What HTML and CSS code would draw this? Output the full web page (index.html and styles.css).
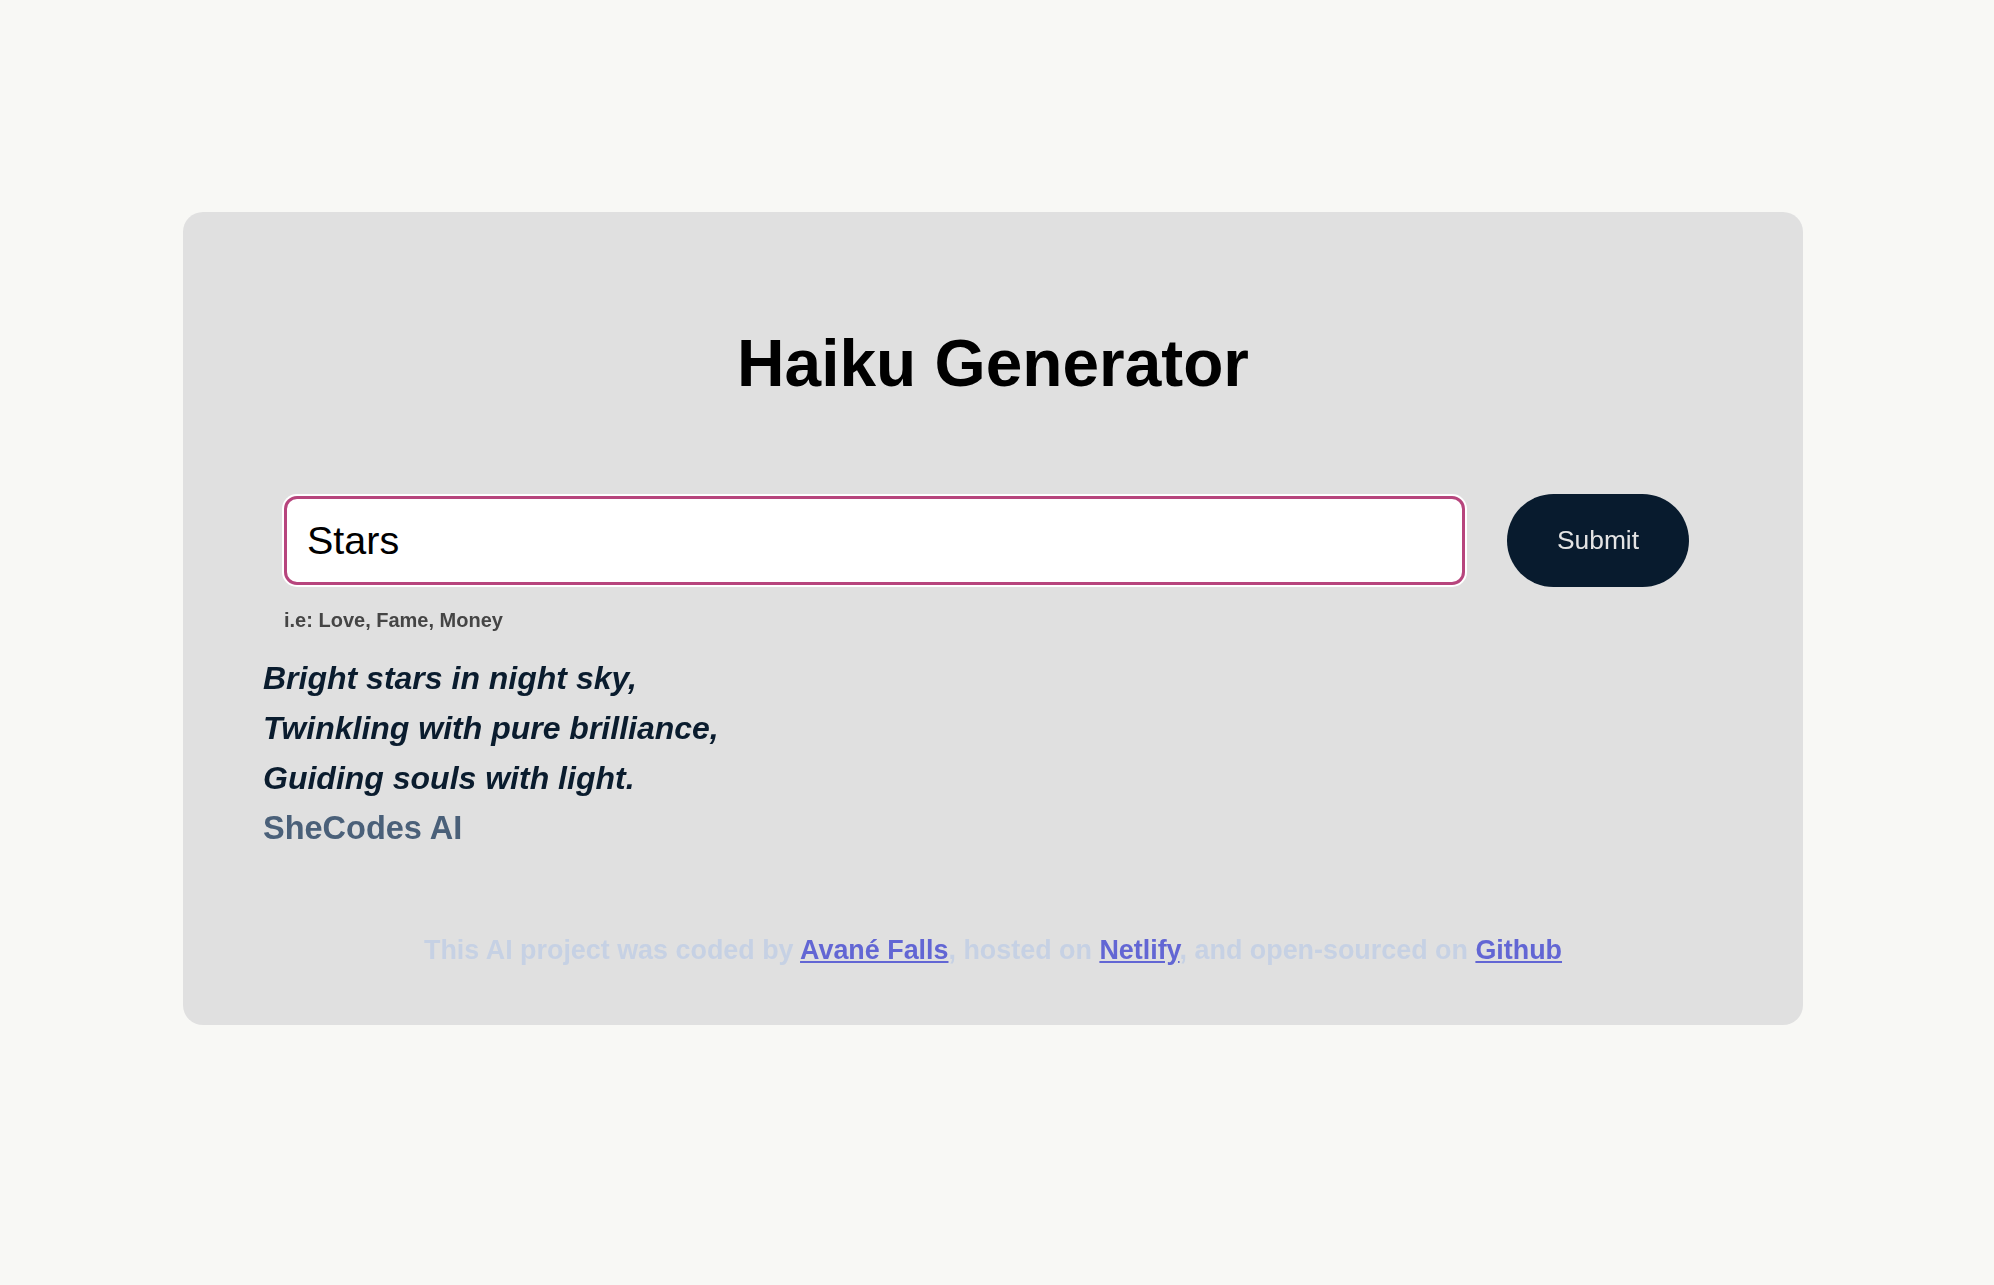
FILE: index.html
```html
<!DOCTYPE html>
<html lang="en">
<head>
<meta charset="utf-8">
<title>Haiku Generator</title>
<link rel="stylesheet" href="styles.css">
</head>
<body>
<main class="card">
  <h1 class="title">Haiku Generator</h1>
  <form class="search-form">
    <input class="topic-input" type="text" value="Stars" autofocus>
    <button class="submit-btn" type="button">Submit</button>
  </form>
  <p class="hint">i.e: Love, Fame, Money</p>
  <div class="poem">
    <p class="haiku">Bright stars in night sky,<br>Twinkling with pure brilliance,<br>Guiding souls with light.</p>
    <p class="signature">SheCodes AI</p>
  </div>
  <footer class="credits">This AI project was coded by <a href="#">Avané Falls</a>, hosted on <a href="#">Netlify</a>, and open-sourced on <a href="#">Github</a></footer>
</main>
</body>
</html>
```

FILE: styles.css
```css
html, body {
  margin: 0;
  padding: 0;
  background: #f8f8f5;
  font-family: "Liberation Sans", Arial, Helvetica, sans-serif;
}

body {
  padding: 212px 0 0 183px;
}

.card {
  box-sizing: border-box;
  width: 1620px;
  background: #e0e0e0;
  border-radius: 20px;
  padding: 119px 80px 61px 80px;
}

.title {
  margin: 0;
  font-size: 65.8px;
  line-height: 65px;
  font-weight: 700;
  text-align: center;
  color: #000;
}

.search-form {
  display: flex;
  align-items: center;
  gap: 42px;
  margin: 98px 0 0 21px;
}

.topic-input {
  box-sizing: border-box;
  width: 1181px;
  height: 89px;
  border: 3px solid #b7457d;
  border-radius: 13px;
  box-shadow: 0 0 0 2px #ffffff;
  outline: none;
  background: #ffffff;
  padding: 0 20px;
  font-family: "Liberation Sans", Arial, sans-serif;
  font-size: 39.5px;
  color: #000;
}

.submit-btn {
  box-sizing: border-box;
  width: 182px;
  height: 93px;
  border: none;
  border-radius: 999px;
  background: #081b2e;
  color: #e4e4e4;
  font-family: "Liberation Sans", Arial, sans-serif;
  font-size: 26.4px;
  padding: 0;
}

.hint {
  margin: 23px 0 0 21px;
  font-size: 20px;
  line-height: 20px;
  font-weight: 700;
  color: #454545;
}

.poem {
  margin-top: 23px;
}

.haiku,
.signature {
  margin: 0;
  font-size: 32px;
  line-height: 50px;
  font-weight: 700;
}

.haiku {
  font-style: italic;
  color: #0a1c2e;
}

.signature {
  font-size: 32.5px;
  color: #4a6079;
}

.credits {
  margin-top: 84px;
  text-align: center;
  font-size: 26.9px;
  line-height: 26.9px;
  font-weight: 700;
  color: #c6d1e4;
}

.credits a {
  color: #6266d4;
  text-decoration: underline;
}
```
